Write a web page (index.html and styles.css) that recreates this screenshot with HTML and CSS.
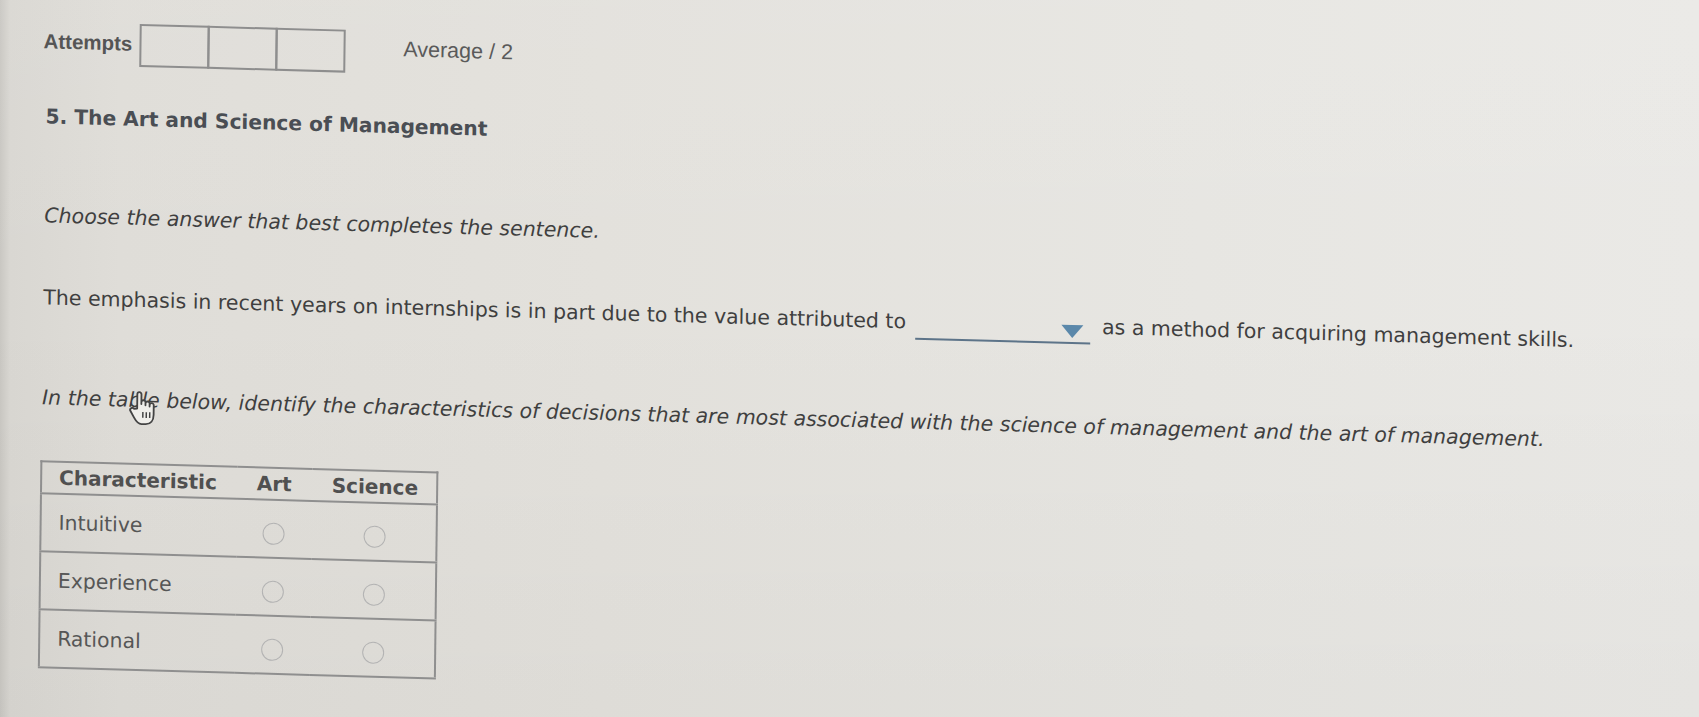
FILE: index.html
```html
<!DOCTYPE html>
<html lang="en">
<head>
<meta charset="utf-8">
<title>The Art and Science of Management</title>
<link rel="stylesheet" href="styles.css">
</head>
<body>
<div class="page">
  <div class="attempts-row">
    <span class="attempts-label">Attempts</span>
    <div class="attempt-boxes">
      <span class="attempt-box"></span>
      <span class="attempt-box"></span>
      <span class="attempt-box"></span>
    </div>
    <span class="average">Average / 2</span>
  </div>

  <h2 class="question-title">5. The Art and Science of Management</h2>

  <p class="prompt">Choose the answer that best completes the sentence.</p>

  <p class="sentence">The emphasis in recent years on internships is in part due to the value attributed to <span class="dropdown"><span class="dropdown-arrow"></span></span> as a method for acquiring management skills.</p>

  <p class="instructions">In the table below, identify the characteristics of decisions that are most associated with the science of management and the art of management.<svg class="cursor" viewBox="0 0 26 34" width="30" height="39" aria-hidden="true"><path d="M7 17 V4.5 a1.8 1.8 0 0 1 3.6 0 V13 V11.5 a1.8 1.8 0 0 1 3.6 0 V14 V12.5 a1.8 1.8 0 0 1 3.6 0 V15 V13.8 a1.8 1.8 0 0 1 3.6 0 V22 c0 5 -2.5 8.5 -7 8.5 h-3.5 c-3 0 -4.5 -2 -6.5 -5.5 l-3.2 -5.6 a1.8 1.8 0 0 1 3 -2 Z" fill="#efeeea" stroke="#444444" stroke-width="1.6" stroke-linejoin="round"/><path d="M12 20 v5 M15 20 v5 M18 20 v5" stroke="#444444" stroke-width="1.3"/></svg></p>

  <table class="grid">
    <thead>
      <tr>
        <th class="col-char">Characteristic</th>
        <th class="col-opt">Art</th>
        <th class="col-opt col-last">Science</th>
      </tr>
    </thead>
    <tbody>
      <tr>
        <td class="col-char">Intuitive</td>
        <td class="col-opt"><span class="radio"></span></td>
        <td class="col-opt col-last"><span class="radio"></span></td>
      </tr>
      <tr>
        <td class="col-char">Experience</td>
        <td class="col-opt"><span class="radio"></span></td>
        <td class="col-opt col-last"><span class="radio"></span></td>
      </tr>
      <tr>
        <td class="col-char">Rational</td>
        <td class="col-opt"><span class="radio"></span></td>
        <td class="col-opt col-last"><span class="radio"></span></td>
      </tr>
    </tbody>
  </table>
</div>
</body>
</html>
```

FILE: styles.css
```css
html, body {
  margin: 0;
  padding: 0;
}

body {
  width: 1699px;
  height: 717px;
  overflow: hidden;
  background:
    linear-gradient(180deg, rgba(255,255,255,0.05) 0, rgba(0,0,0,0) 300px, rgba(0,0,0,0.025) 717px),
    linear-gradient(90deg, #c9c7c2 0, #d9d7d2 10px, #dfddd8 120px, #e3e1dc 600px, #e7e6e2 1200px, #eae9e6 1699px);
  font-family: "DejaVu Sans", Verdana, sans-serif;
  color: #3f3f3f;
}

.page {
  padding: 19px 0 0 47px;
  transform: skew(-0.7deg, 1.6deg);
  transform-origin: 0 0;
}

/* top attempts row */
.attempts-row {
  display: flex;
  align-items: flex-start;
  margin-left: -3px;
  height: 42px;
}

.attempts-label {
  font-family: "Liberation Sans", Arial, sans-serif;
  font-weight: 700;
  font-size: 20.5px;
  line-height: 23px;
  margin-top: 9px;
  color: #555555;
}

.attempt-boxes {
  display: flex;
  margin-left: 7px;
  margin-top: 1px;
}

.attempt-box {
  display: block;
  width: 70px;
  height: 43px;
  box-sizing: border-box;
  border: 2px solid #8e8e8e;
}

.attempt-box + .attempt-box {
  margin-left: -2px;
}

.average {
  font-family: "Liberation Sans", Arial, sans-serif;
  font-size: 21.5px;
  line-height: 24px;
  margin-top: 7px;
  margin-left: 58px;
  color: #5a5a5a;
}

/* question */
.question-title {
  margin: 42px 0 0;
  font-size: 20.2px;
  font-weight: 700;
  line-height: 24px;
  color: #4a4e54;
}

.prompt {
  margin: 75px 0 0;
  font-style: italic;
  font-size: 20.5px;
  line-height: 24px;
}

.sentence {
  margin: 58px 0 0;
  font-size: 20.5px;
  line-height: 24px;
  white-space: nowrap;
}

.dropdown {
  display: inline-block;
  width: 175px;
  height: 22px;
  box-sizing: border-box;
  border-bottom: 2px solid #5d7489;
  vertical-align: -11px;
  margin: 0 5px 0 3px;
}

.dropdown-arrow {
  display: block;
  width: 0;
  height: 0;
  margin: 3px 7px 0 auto;
  border-left: 11px solid transparent;
  border-right: 11px solid transparent;
  border-top: 13px solid #5b88aa;
}

.instructions {
  position: relative;
  margin: 70px 0 0;
  font-style: italic;
  font-size: 20.5px;
  line-height: 24px;
  white-space: nowrap;
}

.cursor {
  position: absolute;
  left: 87px;
  top: 1px;
}

/* table */
.grid {
  margin: 51px 0 0 -1px;
  border-collapse: collapse;
  border: 2px solid #8f8f8f;
  color: #565656;
}

.grid th {
  height: 30px;
  padding: 0;
  font-size: 20px;
  font-weight: 700;
  line-height: 24px;
  text-align: left;
  vertical-align: middle;
  color: #505050;
  border-bottom: 2px solid #8f8f8f;
}

.grid td {
  height: 56px;
  padding: 0;
  font-size: 20.4px;
  line-height: 24px;
  vertical-align: middle;
  border-bottom: 2px solid #8f8f8f;
}

.col-char {
  padding: 0 20px 0 17px !important;
}

.col-opt {
  padding: 0 20px !important;
  text-align: center;
}

.col-last {
  padding-right: 18px !important;
}

.radio {
  display: block;
  width: 22px;
  height: 22px;
  box-sizing: border-box;
  margin: 9px auto 0;
  border: 1.6px solid #b3b3b3;
  border-radius: 50%;
}
```
